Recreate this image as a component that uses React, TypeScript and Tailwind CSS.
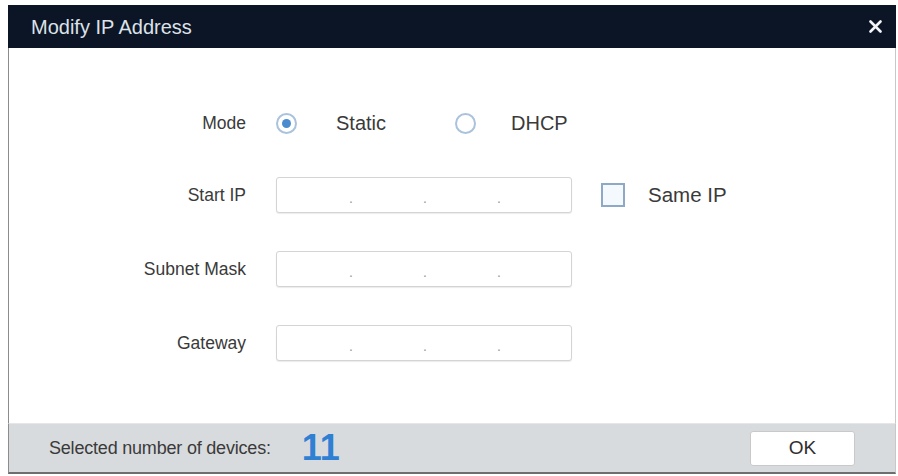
import React from 'react';

const font = { fontFamily: '"Liberation Sans", Arial, sans-serif' };

function IpInput() {
  return (
    <div className="flex h-[36px] w-[296px] items-end rounded-[3px] border border-[#d4d4d4] bg-white pb-[7px] shadow-[0_1px_1px_rgba(0,0,0,0.08)]">
      {[0, 1, 2, 3].map((i) => (
        <React.Fragment key={i}>
          <div className="flex-1" />
          {i < 3 && <span className="w-[2px] text-[14px] leading-none text-[#9a9a9a]">.</span>}
        </React.Fragment>
      ))}
    </div>
  );
}

function Radio({ checked }: { checked?: boolean }) {
  return (
    <div className="flex h-[21px] w-[21px] items-center justify-center rounded-full border-2 border-[#aac2dc] bg-white">
      {checked && <div className="h-[9px] w-[9px] rounded-full bg-[#4a8bd0]" />}
    </div>
  );
}

function Row({ label, children, className }: { label: string; children: React.ReactNode; className?: string }) {
  return (
    <div className={`flex h-[36px] items-center ${className ?? ''}`}>
      <div className="w-[237px] text-right text-[17.5px] text-[#3a3a3a]">{label}</div>
      <div className="ml-[30px] flex items-center">{children}</div>
    </div>
  );
}

export default function App() {
  return (
    <div className="h-[476px] w-[898px] bg-white pl-[8px] pt-[5px]" style={font}>
      <div className="flex w-[888px] flex-col">
        {/* Title bar */}
        <div className="flex h-[43px] items-center justify-between bg-[#0b1526] pl-[23px] pr-[14px]">
          <span className="text-[20px] text-[#dde2e8]">Modify IP Address</span>
          <svg width="13" height="13" viewBox="0 0 13 13">
            <path d="M1.5 1.5 L11.5 11.5 M11.5 1.5 L1.5 11.5" stroke="#f2f4f7" strokeWidth="2.6" strokeLinecap="round" />
          </svg>
        </div>

        {/* Body */}
        <div className="h-[375px] border-l border-r border-l-[#8c8c8c] border-r-[#c8c8c8] pt-[57px]">
          <Row label="Mode">
            <Radio checked />
            <span className="ml-[39px] text-[20px] text-[#3a3a3a]">Static</span>
            <div className="ml-[69px]">
              <Radio />
            </div>
            <span className="ml-[35px] text-[20px] text-[#3a3a3a]">DHCP</span>
          </Row>
          <Row label="Start IP" className="mt-[36px]">
            <IpInput />
            <div className="ml-[29px] h-[24px] w-[24px] border-2 border-[#8ea9c6] bg-[#f3f9fd]" />
            <span className="ml-[23px] text-[20.5px] text-[#3a3a3a]">Same IP</span>
          </Row>
          <Row label="Subnet Mask" className="mt-[38px]">
            <IpInput />
          </Row>
          <Row label="Gateway" className="mt-[38px]">
            <IpInput />
          </Row>
        </div>

        {/* Footer */}
        <div className="flex h-[51px] items-center border-b-2 border-l border-r border-t border-b-[#6e6e6e] border-l-[#8c8c8c] border-r-[#c8c8c8] border-t-[#e4e6e8] bg-[#d8dbde] pl-[40px] pr-[40px]">
          <span className="text-[18px] tracking-[-0.2px] text-[#3a3a3a]">Selected number of devices:</span>
          <span className="ml-[31px] text-[36px] font-bold leading-none text-[#2f7fd3]">11</span>
          <div className="flex-1" />
          <button className="flex h-[35px] w-[105px] items-center justify-center rounded-[3px] border border-[#c9c9c9] bg-white text-[19px] text-[#2f2f2f]">
            OK
          </button>
        </div>
      </div>
    </div>
  );
}
